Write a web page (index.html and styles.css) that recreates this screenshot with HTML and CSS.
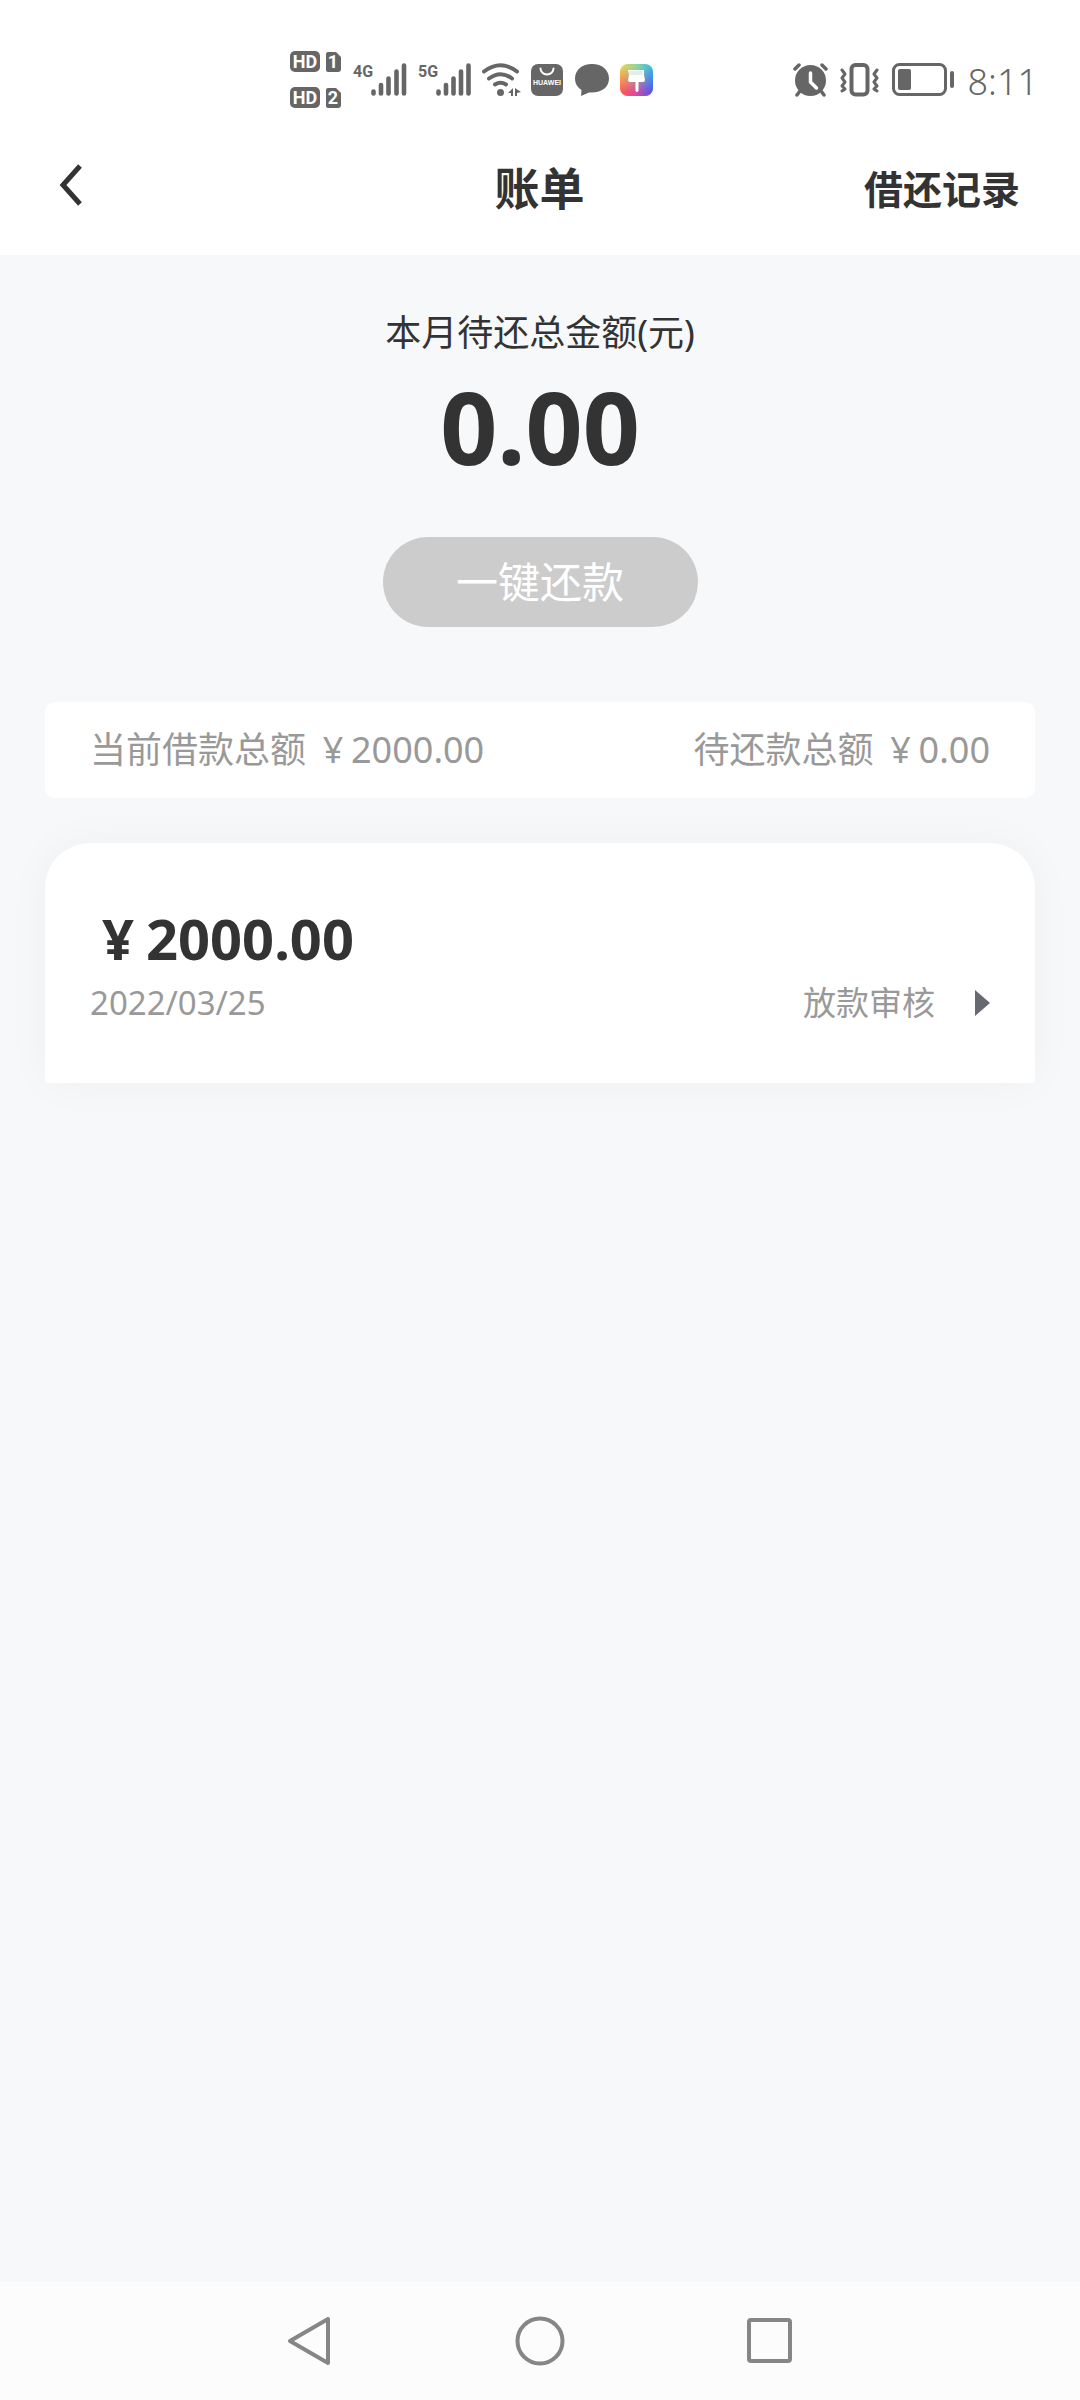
FILE: index.html
```html
<!DOCTYPE html>
<html lang="zh-CN">
<head>
<meta charset="utf-8">
<meta name="viewport" content="width=device-width, initial-scale=1">
<title>账单</title>
<link rel="stylesheet" href="styles.css">
</head>
<body>
<div class="status-bar">
  <div class="status-left">
    <svg width="53" height="58" viewBox="0 0 53 58" fill="#666">
      <rect width="30" height="21" rx="5"/>
      <path d="M38 1h8l5 5v12a3 3 0 0 1-3 3h-10a2 2 0 0 1-2-2v-16a2 2 0 0 1 2-2z"/>
      <rect y="36" width="30" height="21" rx="5"/>
      <path d="M38 37h8l5 5v12a3 3 0 0 1-3 3h-10a2 2 0 0 1-2-2v-16a2 2 0 0 1 2-2z"/>
      <g class="badge-text">
        <text x="15" y="17">HD</text><text x="43" y="17">1</text>
        <text x="15" y="53">HD</text><text x="43" y="53">2</text>
      </g>
    </svg>
    <svg width="55" height="34" viewBox="0 0 55 34">
      <text class="net-text" x="0" y="14">4G</text>
      <path d="M20.5 28.5v2M28 22v8.500M35.500 15.500v15M43.500 8.500v22M51 2.500v28" stroke="#666" stroke-width="4.600" stroke-linecap="round"/>
    </svg>
    <svg width="54" height="34" viewBox="0 0 54 34">
      <text class="net-text" x="0" y="14">5G</text>
      <path d="M20.500 28.500v2M28 22v8.500M35.500 15.500v15M43 8.500v22M50.500 2.500v28" stroke="#666" stroke-width="4.600" stroke-linecap="round"/>
    </svg>
    <svg width="39" height="34" viewBox="0 0 39 34" fill="none" stroke="#666" stroke-width="4" stroke-linecap="round">
      <path d="M2 8.500Q18.500-4 35 8.500M7 15.500Q18.500 7 30 15.500M13 21.500Q18.500 18 24 21.500"/>
      <circle cx="18.500" cy="29.500" r="3.500" fill="#666" stroke="none"/>
      <path d="M31 25v8h-2v-3h-3zM33 25l6 4-4 1v3h-2z" fill="#666" stroke="none"/>
    </svg>
    <svg width="33" height="34" viewBox="0 0 33 34">
      <rect y="1" width="32" height="32" rx="7" fill="#666"/>
      <path d="M9.500 5.500a6.500 6 0 0 0 13 0" fill="none" stroke="#fff" stroke-width="2" stroke-linecap="round"/>
      <text class="store-text" x="16" y="22">HUAWEI</text>
    </svg>
    <svg width="36" height="34" viewBox="0 0 36 34" fill="#666">
      <path d="M18 1C8 1 1 7 1 15.500c0 5 2.500 9 6.500 11.500L7 33l8-3.500c12 1 20-5 20-14C35 7 28 1 18 1z"/>
    </svg>
    <svg width="33" height="34" viewBox="0 0 33 34">
      <defs>
        <linearGradient id="top" x1="0" y1="0" x2="1" y2="0"><stop offset="0" stop-color="#f5cf4e"/><stop offset=".5" stop-color="#8fd59a"/><stop offset="1" stop-color="#2fb4ee"/></linearGradient>
        <linearGradient id="bottom" x1="0" y1="0" x2="1" y2="0"><stop offset="0" stop-color="#ff5a4e"/><stop offset=".45" stop-color="#e0489c"/><stop offset="1" stop-color="#4a55f5"/></linearGradient>
        <linearGradient id="fade" x1="0" y1="0" x2="0" y2="1"><stop offset=".15" stop-color="#000"/><stop offset=".85" stop-color="#fff"/></linearGradient>
        <mask id="lower"><rect width="33" height="34" fill="url(#fade)"/></mask>
      </defs>
      <rect y="1" width="33" height="32" rx="8" fill="url(#top)"/>
      <rect y="1" width="33" height="32" rx="8" fill="url(#bottom)" mask="url(#lower)"/>
      <path d="M8 7h16v5l1 5q0 2-2 2h-4.500v9q-2 2-3 0v-9h-5.500q-2 0-2-2l1-5z" fill="#fff"/>
      <path d="M9 8h14v4h-14z" fill="#dcf3e4"/>
    </svg>
  </div>
  <div class="status-right">
    <svg width="35" height="34" viewBox="0 0 35 34" fill="none" stroke="#666" stroke-linecap="round">
      <circle cx="17.500" cy="17.500" r="15.500" fill="#666" stroke="none"/>
      <path d="M2 6l4-4M33 6l-4-4M7 28l-3 4M28 28l3 4" stroke-width="3.500"/>
      <path d="M17.500 10v9l6 6" stroke="#fff" stroke-width="3.500"/>
    </svg>
    <svg width="40" height="34" viewBox="0 0 40 34" fill="none" stroke="#666" stroke-linecap="round" stroke-linejoin="round">
      <rect x="11.500" y="2" width="16" height="29.500" rx="4" stroke-width="4"/>
      <path d="M2 7l3 4-3 4 3 4-3 4 3 3-3 2M37 7l-3 4 3 4-3 4 3 4-3 3 3 2" stroke-width="3"/>
    </svg>
    <svg width="64" height="34" viewBox="0 0 64 34">
      <rect x="1.500" y="1.500" width="52" height="30" rx="6" fill="none" stroke="#666" stroke-width="3"/>
      <rect x="6" y="6" width="13" height="21" rx="2" fill="#666"/>
      <rect x="58" y="8" width="4" height="17" rx="2" fill="#666"/>
    </svg>
    <time class="clock">8:11</time>
  </div>
</div>
<header class="header">
  <button class="back" type="button" aria-label="返回">
    <svg width="24" height="42" viewBox="0 0 24 42" fill="none" stroke="#333" stroke-width="5"><path d="M21 2L4 21l17 19"/></svg>
  </button>
  <h1 class="title">账单</h1>
  <a class="history" href="#history">借还记录</a>
</header>
<main class="main">
  <section class="due">
    <h2 class="due-label">本月待还总金额(元)</h2>
    <p class="due-amount">0.00</p>
    <button class="repay" type="button">一键还款</button>
  </section>
  <section class="summary">
    <p class="summary-item"><span>当前借款总额</span><span><span class="yen">¥</span>2000.00</span></p>
    <p class="summary-item"><span>待还款总额</span><span><span class="yen">¥</span>0.00</span></p>
  </section>
  <a class="loan" href="#loan">
    <span class="loan-amount"><span class="yen">¥</span>2000.00</span>
    <span class="loan-row">
      <time class="loan-date">2022/03/25</time>
      <span class="loan-status">放款审核
        <svg width="15" height="26" viewBox="0 0 15 26"><path d="M0 0l15 13L0 26z" fill="#666970"/></svg>
      </span>
    </span>
  </a>
</main>
<nav class="nav">
  <button class="nav-button" type="button" aria-label="返回">
    <svg width="50" height="52" viewBox="0 0 50 52"><path d="M43 4v44L5 26z"/></svg>
  </button>
  <button class="nav-button" type="button" aria-label="主页">
    <svg width="50" height="52" viewBox="0 0 50 52"><circle cx="25" cy="26" r="22.500"/></svg>
  </button>
  <button class="nav-button" type="button" aria-label="最近任务">
    <svg width="50" height="52" viewBox="0 0 50 52"><rect x="4" y="5" width="41" height="41" rx="2"/></svg>
  </button>
</nav>
</body>
</html>
```
FILE: styles.css
```css
* {
  box-sizing: border-box;
  margin: 0;
}

body {
  display: flex;
  flex-direction: column;
  min-height: 100vh;
  background: #f7f8fa;
  color: #333;
  font-family: "Noto Sans", "Noto Sans CJK SC", sans-serif;
}

button {
  padding: 0;
  border: 0;
  background: none;
  font-family: inherit;
}

a {
  color: inherit;
  text-decoration: none;
}

svg {
  display: block;
  flex: none;
}

.status-bar {
  display: flex;
  justify-content: space-between;
  height: 122px;
  padding: 38px 42px 0 290px;
  background: #fff;
}

.status-left,
.status-right {
  display: flex;
  align-items: center;
  gap: 10px;
}

.status-right {
  gap: 12px;
}

.badge-text {
  fill: #fff;
  font: bold 18px Roboto, sans-serif;
  text-anchor: middle;
}

.net-text {
  fill: #666;
  font: bold 16px Roboto, sans-serif;
}

.store-text {
  fill: #fff;
  font: bold 7px "Liberation Sans", sans-serif;
  text-anchor: middle;
}

.clock {
  padding-top: 3px;
  color: #666;
  font-size: 36px;
  font-weight: 350;
  line-height: 40px;
}

.header {
  display: grid;
  grid-template-columns: 1fr auto 1fr;
  align-items: center;
  height: 133px;
  padding: 0 60px 0 59px;
  background: #fff;
}

.back {
  justify-self: start;
  padding-bottom: 8px;
}

.title {
  font-size: 45px;
  line-height: 60px;
}

.history {
  justify-self: end;
  font-size: 39px;
  font-weight: bold;
  line-height: 60px;
}

.main {
  flex: 1;
  padding: 45px;
}

.due {
  display: flex;
  flex-direction: column;
  align-items: center;
}

.due-label {
  font-size: 36px;
  font-weight: 400;
  line-height: 66px;
}

.due-amount {
  font-size: 100px;
  font-weight: bold;
  line-height: 120px;
}

.repay {
  width: 315px;
  height: 90px;
  margin-top: 51px;
  border-radius: 45px;
  background: #ccc;
  color: #fff;
  font-size: 42px;
  line-height: 90px;
}

.summary {
  position: relative;
  display: flex;
  align-items: center;
  justify-content: space-between;
  height: 96px;
  margin-top: 75px;
  padding: 0 45px;
  border-radius: 10px;
  background: #fff;
  color: #999;
  font-size: 36px;
  line-height: 48px;
}

.summary-item {
  display: flex;
  gap: 9px;
}

.yen {
  display: inline-block;
  width: 1em;
  text-align: center;
}

.loan {
  display: block;
  margin-top: 45px;
  padding: 65px 45px 56px;
  border-radius: 45px 45px 4px 4px;
  background: #fff;
  box-shadow: 0 0 45px rgba(0, 0, 0, 0.04);
}

.loan-amount {
  display: block;
  font-size: 56px;
  font-weight: bold;
  line-height: 60px;
}

.loan-row {
  display: flex;
  justify-content: space-between;
  padding-top: 11px;
  color: #999;
  font-size: 33px;
  line-height: 48px;
}

.loan-status {
  display: flex;
  align-items: center;
  gap: 40px;
}

.nav {
  display: flex;
  align-items: center;
  justify-content: center;
  height: 118px;
  background: #fcfcfc;
}

.nav-button {
  display: flex;
  justify-content: center;
  width: 230px;
}

.nav-button svg {
  fill: none;
  stroke: #868686;
  stroke-width: 4px;
  stroke-linejoin: round;
}
```
